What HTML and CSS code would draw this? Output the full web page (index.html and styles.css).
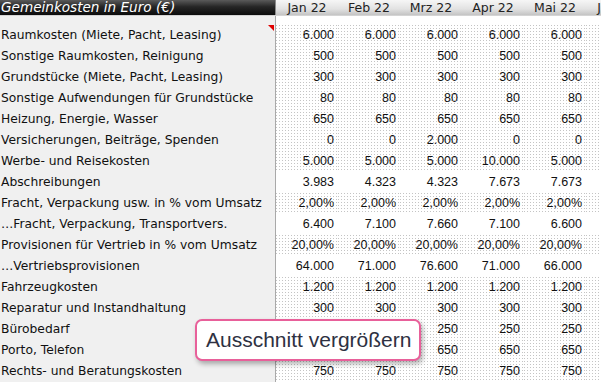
FILE: index.html
```html
<!DOCTYPE html>
<html lang="de">
<head>
<meta charset="utf-8">
<title>Gemeinkosten</title>
<link rel="stylesheet" href="styles.css">
</head>
<body>
<div class="sheet">
  <div class="row head">
    <div class="label">Gemeinkosten in Euro (€)</div>
    <div class="month">Jan 22</div>
    <div class="month">Feb 22</div>
    <div class="month">Mrz 22</div>
    <div class="month">Apr 22</div>
    <div class="month">Mai 22</div>
    <div class="month">Jun 22</div>
  </div>
  <div class="row spacer">
    <div class="label"></div>
    <div class="fill"></div>
  </div>
  <div class="row input">
    <div class="label">Raumkosten (Miete, Pacht, Leasing)<span class="note"></span></div>
    <div class="cell">6.000</div><div class="cell">6.000</div><div class="cell">6.000</div><div class="cell">6.000</div><div class="cell">6.000</div><div class="cell"></div>
  </div>
  <div class="row input">
    <div class="label">Sonstige Raumkosten, Reinigung</div>
    <div class="cell">500</div><div class="cell">500</div><div class="cell">500</div><div class="cell">500</div><div class="cell">500</div><div class="cell"></div>
  </div>
  <div class="row input">
    <div class="label">Grundstücke (Miete, Pacht, Leasing)</div>
    <div class="cell">300</div><div class="cell">300</div><div class="cell">300</div><div class="cell">300</div><div class="cell">300</div><div class="cell"></div>
  </div>
  <div class="row input">
    <div class="label">Sonstige Aufwendungen für Grundstücke</div>
    <div class="cell">80</div><div class="cell">80</div><div class="cell">80</div><div class="cell">80</div><div class="cell">80</div><div class="cell"></div>
  </div>
  <div class="row input">
    <div class="label">Heizung, Energie, Wasser</div>
    <div class="cell">650</div><div class="cell">650</div><div class="cell">650</div><div class="cell">650</div><div class="cell">650</div><div class="cell"></div>
  </div>
  <div class="row input">
    <div class="label">Versicherungen, Beiträge, Spenden</div>
    <div class="cell">0</div><div class="cell">0</div><div class="cell">2.000</div><div class="cell">0</div><div class="cell">0</div><div class="cell"></div>
  </div>
  <div class="row input">
    <div class="label">Werbe- und Reisekosten</div>
    <div class="cell">5.000</div><div class="cell">5.000</div><div class="cell">5.000</div><div class="cell">10.000</div><div class="cell">5.000</div><div class="cell"></div>
  </div>
  <div class="row calc">
    <div class="label">Abschreibungen</div>
    <div class="cell">3.983</div><div class="cell">4.323</div><div class="cell">4.323</div><div class="cell">7.673</div><div class="cell">7.673</div><div class="cell"></div>
  </div>
  <div class="row input">
    <div class="label">Fracht, Verpackung usw. in % vom Umsatz</div>
    <div class="cell">2,00%</div><div class="cell">2,00%</div><div class="cell">2,00%</div><div class="cell">2,00%</div><div class="cell">2,00%</div><div class="cell"></div>
  </div>
  <div class="row calc">
    <div class="label">…Fracht, Verpackung, Transportvers.</div>
    <div class="cell">6.400</div><div class="cell">7.100</div><div class="cell">7.660</div><div class="cell">7.100</div><div class="cell">6.600</div><div class="cell"></div>
  </div>
  <div class="row input">
    <div class="label">Provisionen für Vertrieb in % vom Umsatz</div>
    <div class="cell">20,00%</div><div class="cell">20,00%</div><div class="cell">20,00%</div><div class="cell">20,00%</div><div class="cell">20,00%</div><div class="cell"></div>
  </div>
  <div class="row calc">
    <div class="label">…Vertriebsprovisionen</div>
    <div class="cell">64.000</div><div class="cell">71.000</div><div class="cell">76.600</div><div class="cell">71.000</div><div class="cell">66.000</div><div class="cell"></div>
  </div>
  <div class="row input">
    <div class="label">Fahrzeugkosten</div>
    <div class="cell">1.200</div><div class="cell">1.200</div><div class="cell">1.200</div><div class="cell">1.200</div><div class="cell">1.200</div><div class="cell"></div>
  </div>
  <div class="row input">
    <div class="label">Reparatur und Instandhaltung</div>
    <div class="cell">300</div><div class="cell">300</div><div class="cell">300</div><div class="cell">300</div><div class="cell">300</div><div class="cell"></div>
  </div>
  <div class="row input">
    <div class="label">Bürobedarf</div>
    <div class="cell">250</div><div class="cell">250</div><div class="cell">250</div><div class="cell">250</div><div class="cell">250</div><div class="cell"></div>
  </div>
  <div class="row input">
    <div class="label">Porto, Telefon</div>
    <div class="cell">650</div><div class="cell">650</div><div class="cell">650</div><div class="cell">650</div><div class="cell">650</div><div class="cell"></div>
  </div>
  <div class="row input">
    <div class="label">Rechts- und Beratungskosten</div>
    <div class="cell">750</div><div class="cell">750</div><div class="cell">750</div><div class="cell">750</div><div class="cell">750</div><div class="cell"></div>
  </div>

  <div class="tooltip">Ausschnitt vergrößern</div>
</div>
</body>
</html>
```

FILE: styles.css
```css
html, body {
  margin: 0;
  padding: 0;
  background: #ffffff;
}

.sheet {
  position: relative;
  width: 601px;
  height: 382px;
  overflow: hidden;
  font-family: "DejaVu Sans", sans-serif;
  font-size: 12.3px;
  color: #111111;
}

.row {
  display: grid;
  grid-template-columns: 276px repeat(6, 62px);
  height: 21px;
  width: 650px;
}

.label {
  position: relative;
  box-sizing: border-box;
  background: #f0f0f0;
  border-right: 1px solid #a9a9a9;
  padding-left: 1px;
  line-height: 21px;
  white-space: nowrap;
}

.cell {
  box-sizing: border-box;
  text-align: right;
  padding-right: 4px;
  line-height: 21px;
  font-family: "Liberation Sans", sans-serif;
  font-size: 12.5px;
  white-space: nowrap;
}

.input .cell {
  background-color: #ffffff;
  background-image: conic-gradient(from 0deg at 1px 1px, transparent 75%, #c4c4c4 0);
  background-size: 3px 3px;
}

.calc .cell {
  background: #ffffff;
}

/* header */
.head {
  height: 15px;
  border-bottom: 1px solid #d4d4d4;
}

.head .label {
  background: linear-gradient(#5a5a5a, #262626 45%, #0c0c0c);
  border-right: 1px solid #8a8a8a;
  color: #ffffff;
  font-style: italic;
  line-height: 15px;
  font-size: 13.6px;
}

.month {
  background: linear-gradient(#f6f6f6, #e2e2e2 60%, #c4c4c4);
  text-align: center;
  line-height: 15px;
  font-size: 12.5px;
  color: #222222;
  white-space: nowrap;
  overflow: hidden;
}

.spacer {
  height: 9px;
  grid-template-columns: 276px 1fr;
}

.spacer .fill {
  background: #ffffff;
}

.note {
  position: absolute;
  right: 1px;
  top: 0;
  width: 0;
  height: 0;
  border-top: 6px solid #e00000;
  border-left: 6px solid transparent;
}

.tooltip {
  position: absolute;
  left: 195px;
  top: 319px;
  width: 226px;
  height: 42px;
  box-sizing: border-box;
  border: 2px solid #e8609a;
  border-radius: 7px;
  background: #ffffff;
  box-shadow: 2px 3px 5px rgba(0, 0, 0, 0.3);
  font-family: "Liberation Sans", sans-serif;
  font-size: 21px;
  color: #2e3142;
  line-height: 38px;
  padding-left: 9px;
  white-space: nowrap;
}
```
